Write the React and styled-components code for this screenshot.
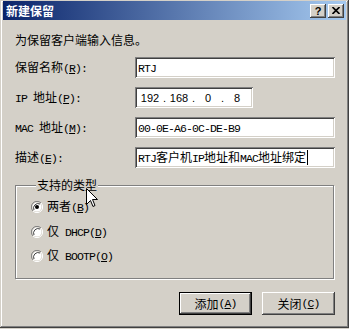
import React from 'react';
import styled, { createGlobalStyle, css } from 'styled-components';

const GlobalStyle = createGlobalStyle`
  body {
    margin: 0;
    background: #d4d0c8;
  }
`;

const raised = css`
  box-shadow: inset -1px -1px #404040, inset 1px 1px #ffffff,
    inset -2px -2px #808080, inset 2px 2px #d4d0c8;
`;

const sunken = css`
  box-shadow: inset 1px 1px #808080, inset -1px -1px #ffffff,
    inset 2px 2px #404040, inset -2px -2px #d4d0c8;
`;

const Window = styled.div`
  position: relative;
  box-sizing: border-box;
  width: 349px;
  height: 328px;
  padding: 1px 3px 3px 3px;
  display: flex;
  flex-direction: column;
  background: #d4d0c8;
  box-shadow: inset -1px -1px #404040, inset 1px 1px #d4d0c8,
    inset -2px -2px #808080, inset 2px 2px #ffffff;
  font-family: "Noto Sans CJK SC", sans-serif;
  font-size: 12px;
  color: #000;
`;

const TitleBar = styled.div`
  height: 19px;
  display: flex;
  align-items: center;
  justify-content: space-between;
  padding: 0 2px 0 3px;
  background: linear-gradient(to right, #0a246a, #a6caf0);
`;

const Title = styled.span`
  color: #fff;
  font-weight: bold;
  font-size: 12px;
  line-height: 14px;
`;

const CaptionButtons = styled.div`
  display: flex;
  gap: 2px;
`;

const CaptionButton = styled.div`
  width: 16px;
  height: 14px;
  display: flex;
  align-items: center;
  justify-content: center;
  background: #d4d0c8;
  font-family: "Liberation Sans", sans-serif;
  font-weight: bold;
  font-size: 11px;
  line-height: 14px;
  ${raised}
`;

const Content = styled.div`
  padding: 0 11px 0 12px;
  display: flex;
  flex-direction: column;
`;

const Intro = styled.div`
  margin-top: 13px;
  line-height: 14px;
`;

const Form = styled.div`
  margin-top: 10px;
  display: flex;
  flex-direction: column;
  gap: 9px;
`;

const Row = styled.div`
  height: 21px;
  display: flex;
  align-items: center;
`;

const FieldLabel = styled.span`
  width: 120px;
  line-height: 14px;
`;

const Edit = styled.div`
  box-sizing: border-box;
  width: ${(p) => p.$width}px;
  height: 21px;
  padding-left: 3px;
  display: flex;
  align-items: center;
  background: #fff;
  line-height: 14px;
  ${sunken}
`;

const IpField = styled.span`
  width: 24px;
  text-align: center;
  font-family: "Liberation Sans", sans-serif;
  font-size: 11px;
`;

const IpDot = styled.span`
  width: 5px;
  text-align: center;
  font-family: "Liberation Sans", sans-serif;
  font-size: 11px;
`;

const Lat = styled.span`
  font-family: "Liberation Mono", monospace;
  font-size: 11.5px;
  letter-spacing: -0.9px;
  white-space: pre;
`;

const Caret = styled.span`
  display: inline-block;
  width: 1px;
  height: 15px;
  margin-left: 1px;
  vertical-align: -3px;
  background: #000;
`;

const GroupBox = styled.fieldset`
  margin: 10px 1px 0 0;
  padding: 7px 0 14px 15px;
  min-width: 0;
  border: 1px solid #808080;
  box-shadow: inset 1px 1px #ffffff, 1px 1px #ffffff;
  display: flex;
  flex-direction: column;
  gap: 8.5px;
`;

const Legend = styled.legend`
  margin-left: 5px;
  padding: 0 1px;
  line-height: 14px;
  background: #d4d0c8;
`;

const RadioRow = styled.label`
  height: 16px;
  display: flex;
  align-items: center;
  gap: 4px;
  line-height: 14px;
`;

const ButtonRow = styled.div`
  margin-top: 13px;
  display: flex;
  justify-content: flex-end;
  gap: 10px;
`;

const Button = styled.div`
  box-sizing: border-box;
  width: 73px;
  height: 23px;
  display: flex;
  align-items: center;
  justify-content: center;
  background: #d4d0c8;
  line-height: 14px;
  ${raised}
  ${(p) =>
    p.$default &&
    css`
      border: 1px solid #000;
    `}
`;

const Cursor = styled.svg`
  position: absolute;
  left: 86px;
  top: 188px;
`;

// ASCII runs use a narrow mono face, "&X" marks the underlined access key
const txt = (text) =>
  text
    .split(/([ -~]+)/)
    .filter(Boolean)
    .map((run, i) => {
      if (!/^[ -~]+$/.test(run)) return run;
      const bits = run.split(/&(.)/);
      return (
        <Lat key={i}>
          {bits.map((s, j) => (j % 2 ? <u key={j}>{s}</u> : s))}
        </Lat>
      );
    });

function Radio({ checked }) {
  return (
    <svg width="12" height="12" viewBox="0 0 12 12">
      <path d="M10 2 A5.5 5.5 0 0 0 2 10" fill="none" stroke="#808080" strokeWidth="1" />
      <path d="M2 10 A5.5 5.5 0 0 0 10 2" fill="none" stroke="#ffffff" strokeWidth="1" />
      <circle cx="6" cy="6" r="4.5" fill="#fff" />
      <path d="M9 3 A4.5 4.5 0 0 0 3 9" fill="none" stroke="#404040" strokeWidth="1" />
      {checked && <circle cx="6" cy="6" r="2" fill="#000" />}
    </svg>
  );
}

const fields = [
  { label: '保留名称(&R):', value: 'RTJ', width: 200 },
  { label: 'IP 地址(&P):', ip: ['192', '168', '0', '8'], width: 118 },
  { label: 'MAC 地址(&M):', value: '00-0E-A6-0C-DE-B9', width: 200 },
  { label: '描述(&E):', value: 'RTJ客户机IP地址和MAC地址绑定', width: 200, caret: true },
];

const types = [
  { label: '两者(&B)', checked: true },
  { label: '仅 DHCP(&D)' },
  { label: '仅 BOOTP(&O)' },
];

export default function App() {
  return (
    <>
      <GlobalStyle />
      <Window>
        <TitleBar>
          <Title>新建保留</Title>
          <CaptionButtons>
            <CaptionButton>?</CaptionButton>
            <CaptionButton>
              <svg width="8" height="7" viewBox="0 0 8 7">
                <path d="M0.5 0 L7.5 7 M7.5 0 L0.5 7" stroke="#000" strokeWidth="1.6" />
              </svg>
            </CaptionButton>
          </CaptionButtons>
        </TitleBar>
        <Content>
          <Intro>为保留客户端输入信息。</Intro>
          <Form>
            {fields.map((f) => (
              <Row key={f.label}>
                <FieldLabel>{txt(f.label)}</FieldLabel>
                <Edit $width={f.width}>
                  {f.ip ? (
                    f.ip.map((n, i) => (
                      <React.Fragment key={i}>
                        {i > 0 && <IpDot>.</IpDot>}
                        <IpField>{n}</IpField>
                      </React.Fragment>
                    ))
                  ) : (
                    <span>
                      {txt(f.value)}
                      {f.caret && <Caret />}
                    </span>
                  )}
                </Edit>
              </Row>
            ))}
          </Form>
          <GroupBox>
            <Legend>支持的类型</Legend>
            {types.map((t) => (
              <RadioRow key={t.label}>
                <Radio checked={t.checked} />
                <span>{txt(t.label)}</span>
              </RadioRow>
            ))}
          </GroupBox>
          <ButtonRow>
            <Button $default>{txt('添加(&A)')}</Button>
            <Button>{txt('关闭(&C)')}</Button>
          </ButtonRow>
        </Content>
        <Cursor width="12" height="20" viewBox="0 0 12 20">
          <path
            d="M0.5 0.5 L0.5 16.5 L4.5 12.5 L7 18.5 L9 17.5 L6.5 11.5 L11.5 11.5 Z"
            fill="#fff"
            stroke="#000"
            strokeWidth="1"
          />
        </Cursor>
      </Window>
    </>
  );
}
